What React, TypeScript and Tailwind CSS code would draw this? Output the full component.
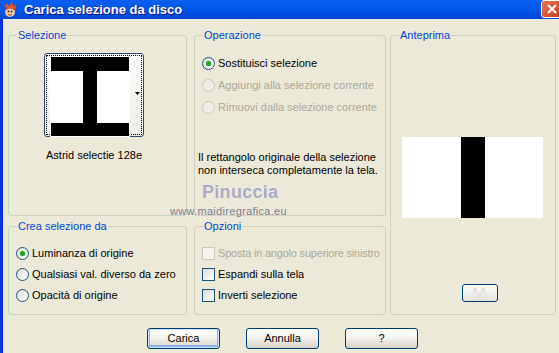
import type { ReactNode } from 'react';

const font = "font-['Liberation_Sans',Arial,sans-serif]";

function Radio({ checked, disabled }: { checked?: boolean; disabled?: boolean }) {
  return (
    <span
      className={`flex size-[13px] shrink-0 items-center justify-center rounded-full border ${
        disabled ? 'border-[#CAC8BB] bg-[#F0EEE4]' : 'border-[#1C5180] bg-gradient-to-br from-[#DCDCD7] to-white'
      }`}
    >
      {checked && <span className="size-[5px] rounded-full bg-[#21A121] shadow-[0_0_1px_#5fd35f]" />}
    </span>
  );
}

function Checkbox({ disabled }: { disabled?: boolean }) {
  return (
    <span
      className={`size-[13px] shrink-0 border ${
        disabled ? 'border-[#CAC8BB] bg-[#F4F3EE]' : 'border-[#1C5180] bg-gradient-to-br from-[#DCDCD7] to-white'
      }`}
    />
  );
}

function Group({ title, className, children }: { title: string; className: string; children?: ReactNode }) {
  return (
    <fieldset className={`rounded-[3px] border border-[#D0D0BF] ${className}`}>
      <legend className="ml-[8px] px-[1px] text-[11px] leading-[13px] text-[#0046D5]">{title}</legend>
      {children}
    </fieldset>
  );
}

function XpButton({ label, primary }: { label: string; primary?: boolean }) {
  return (
    <button
      className={`h-[21px] w-[73px] rounded-[3px] border border-[#003C74] bg-gradient-to-b from-white via-[#F3F2EC] to-[#D6D0C5] text-[11px] text-black ${
        primary ? 'shadow-[inset_0_0_0_1px_#CEE7FF,inset_0_-1px_0_2px_#89ADE4]' : ''
      }`}
    >
      {label}
    </button>
  );
}

function AppIcon() {
  return (
    <svg width="16" height="16" viewBox="0 0 16 16">
      <path d="M2 5 L5 1 L7 4 L10 0 L11 4 L15 3 L13 7 Z" fill="#E8502A" />
      <ellipse cx="8" cy="10" rx="5" ry="5" fill="#F6C9A0" />
      <path d="M3 7 Q8 3 13 7 L12 8 Q8 5 4 8 Z" fill="#D8461F" />
      <circle cx="6.5" cy="9.5" r="1" fill="#333" />
      <circle cx="9.5" cy="9.5" r="1" fill="#333" />
      <path d="M6 12.5 Q8 14 10 12.5" stroke="#A0401E" strokeWidth="1" fill="none" />
    </svg>
  );
}

export default function App() {
  return (
    <div className={`relative flex h-[353px] w-[559px] flex-col overflow-hidden bg-[#ECE9D8] ${font} text-[11px] text-black`}>
      {/* Title bar */}
      <div className="flex h-[19px] shrink-0 items-center bg-gradient-to-b from-[#0A5FF0] via-[#0055EA] to-[#0045D6] pl-[2px]">
        <AppIcon />
        <span className="ml-[6px] text-[13px] font-bold leading-none text-white [text-shadow:1px_1px_#0F1089]">
          Carica selezione da disco
        </span>
        <div className="flex-1" />
        <div className="mr-[-4px] flex h-[18px] w-[22px] items-center justify-center self-start rounded-[3px] border border-white bg-gradient-to-br from-[#E97455] to-[#C33B15]">
          <svg width="10" height="10" viewBox="0 0 10 10">
            <path d="M1 1 L9 9 M9 1 L1 9" stroke="white" strokeWidth="2" />
          </svg>
        </div>
      </div>

      {/* Body */}
      <div className="flex flex-1 flex-col border-l-[3px] border-[#0831D9] pl-[5px] pt-[10px]">
        <div className="flex">
          {/* Left column */}
          <div className="flex w-[179px] flex-col gap-[4px]">
            <Group title="Selezione" className="h-[187px]">
              <div className="ml-[35px] mt-[11px] flex w-[100px] flex-col">
                <div className="flex h-[84px] w-[100px] rounded-[3px] border border-[#2B4B76] bg-gradient-to-b from-white to-[#EEEDE5] p-[1px]">
                  <div className="flex flex-1 border border-dotted border-black pl-[3px] pt-[1px]">
                    <svg width="80" height="80" viewBox="0 0 80 80" className="shrink-0">
                      <rect width="80" height="80" fill="white" />
                      <rect x="1" y="0" width="78" height="14" fill="black" />
                      <rect x="33" y="14" width="14" height="52" fill="black" />
                      <rect x="1" y="66" width="78" height="13" fill="black" />
                    </svg>
                    <div className="flex flex-1 items-center justify-end pb-[4px] pr-[1px]">
                      <svg width="5" height="3" viewBox="0 0 5 3">
                        <path d="M0 0 H5 L2.5 3 Z" fill="black" />
                      </svg>
                    </div>
                  </div>
                </div>
                <div className="mt-[12px] text-center leading-[13px]">Astrid selectie 128e</div>
              </div>
            </Group>
            <Group title="Crea selezione da" className="h-[95px]">
              <div className="mt-[14px] flex flex-col gap-[8px] pl-[7px]">
                <label className="flex h-[13px] items-center gap-[3px]">
                  <Radio checked />
                  <span>Luminanza di origine</span>
                </label>
                <label className="flex h-[13px] items-center gap-[3px]">
                  <Radio />
                  <span>Qualsiasi val. diverso da zero</span>
                </label>
                <label className="flex h-[13px] items-center gap-[3px]">
                  <Radio />
                  <span>Opacità di origine</span>
                </label>
              </div>
            </Group>
          </div>

          {/* Middle column */}
          <div className="ml-[7px] flex w-[192px] flex-col gap-[4px]">
            <Group title="Operazione" className="h-[187px]">
              <div className="mt-[15px] flex flex-col gap-[9px] pl-[7px]">
                <label className="flex h-[13px] items-center gap-[3px]">
                  <Radio checked />
                  <span>Sostituisci selezione</span>
                </label>
                <label className="flex h-[13px] items-center gap-[3px] text-[#ACA899]">
                  <Radio disabled />
                  <span>Aggiungi alla selezione corrente</span>
                </label>
                <label className="flex h-[13px] items-center gap-[3px] text-[#ACA899]">
                  <Radio disabled />
                  <span>Rimuovi dalla selezione corrente</span>
                </label>
              </div>
              <p className="mt-[37px] pl-[3px] leading-[13px]">
                Il rettangolo originale della selezione
                <br />
                non interseca completamente la tela.
              </p>
            </Group>
            <Group title="Opzioni" className="h-[95px]">
              <div className="mt-[14px] flex flex-col gap-[8px] pl-[7px]">
                <label className="flex h-[13px] items-center gap-[3px] whitespace-nowrap tracking-[-0.2px] text-[#ACA899]">
                  <Checkbox disabled />
                  <span>Sposta in angolo superiore sinistro</span>
                </label>
                <label className="flex h-[13px] items-center gap-[3px]">
                  <Checkbox />
                  <span>Espandi sulla tela</span>
                </label>
                <label className="flex h-[13px] items-center gap-[3px]">
                  <Checkbox />
                  <span>Inverti selezione</span>
                </label>
              </div>
            </Group>
          </div>

          {/* Right column */}
          <Group title="Anteprima" className="ml-[4px] h-[286px] w-[166px]">
            <div className="ml-[11px] mt-[95px] flex h-[81px] w-[141px] bg-white pl-[59px]">
              <div className="h-full w-[24px] bg-black" />
            </div>
            <div className="ml-[71px] mt-[66px] flex h-[18px] w-[36px] items-center justify-center rounded-[3px] border border-[#003C74] bg-gradient-to-b from-white to-[#E3E1D8]">
              <svg width="14" height="10" viewBox="0 0 14 10">
                <rect x="0" y="0" width="4" height="5" fill="#E2E2E2" />
                <rect x="8" y="0" width="4" height="5" fill="#E2E2E2" />
                <rect x="4" y="5" width="4" height="5" fill="#E2E2E2" />
                <rect x="12" y="5" width="2" height="5" fill="#E2E2E2" />
              </svg>
            </div>
          </Group>
        </div>

        {/* Buttons */}
        <div className="mt-[13px] flex gap-[26px] pl-[139px]">
          <XpButton label="Carica" primary />
          <XpButton label="Annulla" />
          <XpButton label="?" />
        </div>
      </div>

      {/* Watermark */}
      <div className="pointer-events-none absolute left-[170px] top-[182px] flex flex-col">
        <span className="ml-[32px] text-[18px] font-semibold leading-[20px] tracking-[0.3px] text-[#A9A9C6] [text-shadow:0_0_1px_white]">
          Pinuccia
        </span>
        <span className="mt-[3px] text-[11px] leading-[12px] tracking-[0.3px] text-[#7D7D93]">www.maidiregrafica.eu</span>
      </div>
    </div>
  );
}
